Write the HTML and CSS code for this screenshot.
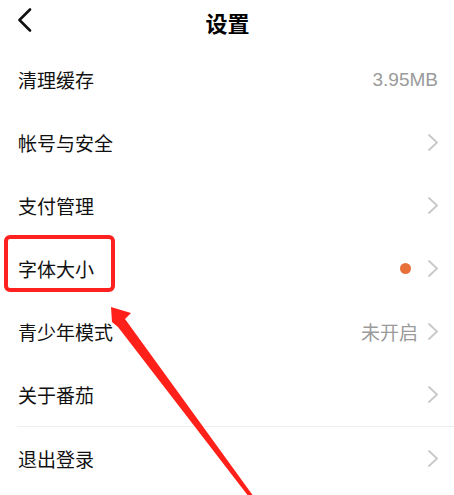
FILE: index.html
```html
<!DOCTYPE html>
<html lang="zh-CN">
<head>
<meta charset="utf-8">
<title>设置</title>
<link rel="stylesheet" href="styles.css">
</head>
<body>
<div class="page">
  <header class="header">
    <span class="back">
      <svg width="16" height="24" viewBox="0 0 16 24"><polyline points="13,1.5 2.5,12 13,22.5" fill="none" stroke="#111" stroke-width="2.6" stroke-linecap="round" stroke-linejoin="round"/></svg>
    </span>
    <h1 class="title">设置</h1>
    <span></span>
  </header>
  <ul class="list">
    <li class="row"><span class="label">清理缓存</span><span class="value">3.95MB</span></li>
    <li class="row"><span class="label">帐号与安全</span><svg class="chev" width="10" height="17" viewBox="0 0 10 17"><polyline points="1,1 9,8.5 1,16"/></svg></li>
    <li class="row"><span class="label">支付管理</span><svg class="chev" width="10" height="17" viewBox="0 0 10 17"><polyline points="1,1 9,8.5 1,16"/></svg></li>
    <li class="row"><span class="label">字体大小</span><span class="dot"></span><svg class="chev" width="10" height="17" viewBox="0 0 10 17"><polyline points="1,1 9,8.5 1,16"/></svg></li>
    <li class="row"><span class="label">青少年模式</span><span class="value cjk">未开启</span><svg class="chev" width="10" height="17" viewBox="0 0 10 17"><polyline points="1,1 9,8.5 1,16"/></svg></li>
    <li class="row"><span class="label">关于番茄</span><svg class="chev" width="10" height="17" viewBox="0 0 10 17"><polyline points="1,1 9,8.5 1,16"/></svg></li>
    <li class="row row-sep"><span class="label">退出登录</span><svg class="chev" width="10" height="17" viewBox="0 0 10 17"><polyline points="1,1 9,8.5 1,16"/></svg></li>
  </ul>
  <div class="highlight"></div>
  <svg class="arrow" width="454" height="495" viewBox="0 0 454 495">
    <polygon points="111,307 131,313 125,319 254,497 249,497 118,327 112,322" fill="#ff2119"/>
  </svg>
</div>
</body>
</html>
```
FILE: styles.css
```css
html, body {
  margin: 0;
  padding: 0;
  background: #fff;
}
.page {
  position: relative;
  width: 454px;
  height: 495px;
  overflow: hidden;
  font-family: "Noto Sans CJK SC", "Noto Sans", sans-serif;
  color: #111;
}
.header {
  height: 43px;
  display: grid;
  grid-template-columns: 1fr auto 1fr;
  align-items: center;
  padding: 0 16px 0 17px;
}
.back {
  display: flex;
  align-items: center;
  margin-top: -3px;
}
.back svg { display: block; }
.title {
  margin: 0;
  font-size: 22px;
  font-weight: 700;
  color: #000;
  line-height: 1;
}
.list {
  list-style: none;
  margin: 5px 0 0;
  padding: 0;
}
.row {
  height: 63px;
  display: flex;
  align-items: center;
  padding: 0 16px 0 18px;
}
.row-sep {
  border-top: 1px solid #eeeeee;
  margin-left: 17px;
  padding-left: 1px;
  height: 62px;
}
.label {
  flex: 1;
  font-size: 19px;
  line-height: 1;
}
.value {
  font-family: "Liberation Sans", Arial, sans-serif;
  font-size: 19px;
  color: #9a9a9a;
  line-height: 1;
}
.value.cjk {
  font-family: "Noto Sans CJK SC", sans-serif;
  margin-right: 10px;
}
.dot {
  width: 11px;
  height: 11px;
  border-radius: 50%;
  background: #e8713a;
  margin-right: 17px;
}
.chev {
  display: block;
  flex: none;
}
.chev polyline {
  fill: none;
  stroke: #c8c8c8;
  stroke-width: 1.8;
  stroke-linejoin: round;
  stroke-linecap: round;
}
.highlight {
  position: absolute;
  left: 4px;
  top: 235px;
  width: 103px;
  height: 49px;
  border: 4px solid #ff2020;
  border-radius: 6px;
}
.arrow {
  position: absolute;
  left: 0;
  top: 0;
  pointer-events: none;
}
```
